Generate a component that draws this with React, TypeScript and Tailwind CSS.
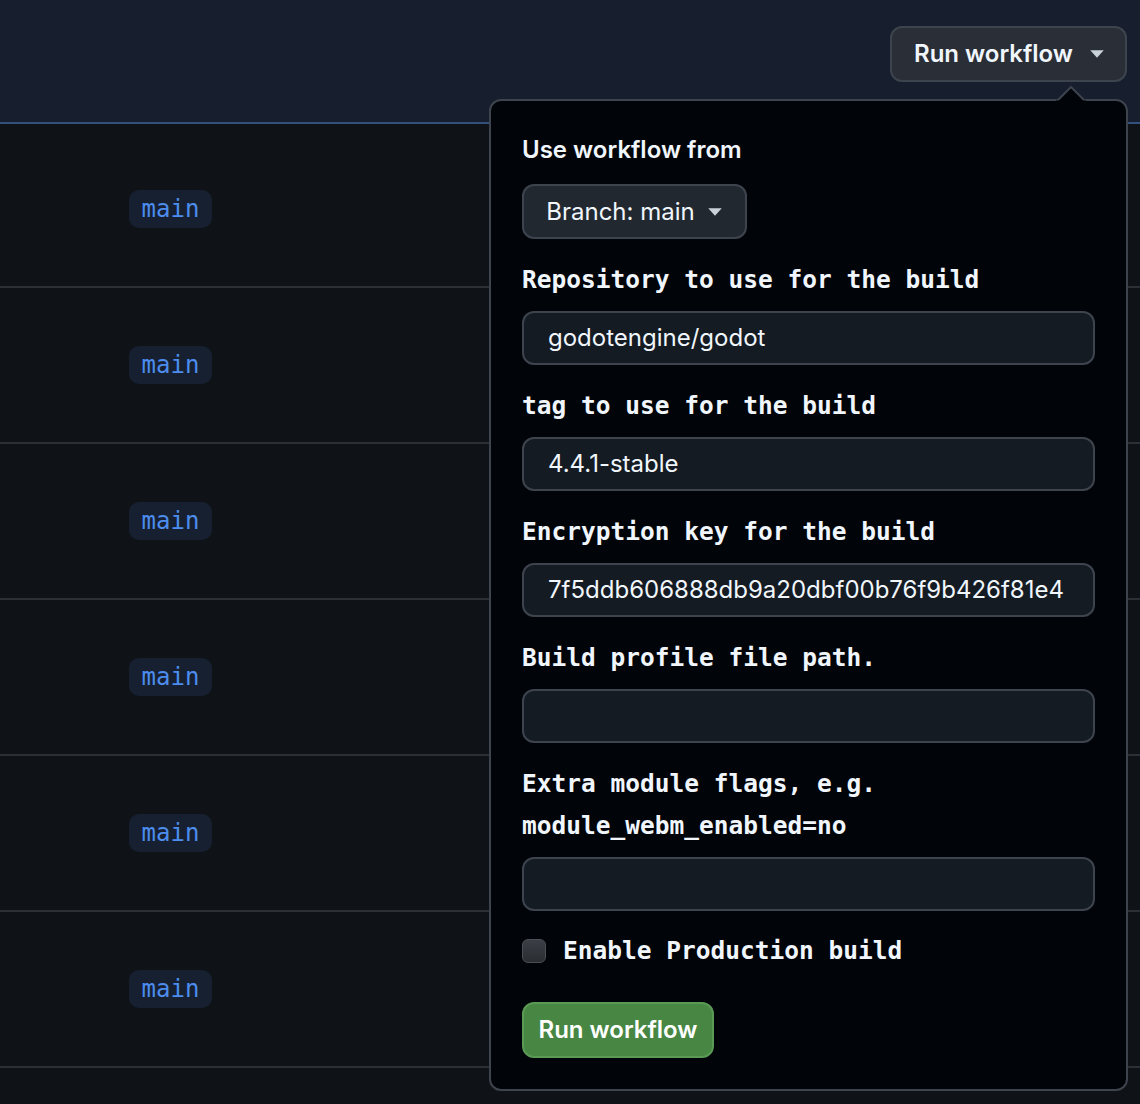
import React from 'react';

const mono = "font-['DejaVu_Sans_Mono','Liberation_Mono',monospace]";
const sans = "font-['Inter','Liberation_Sans',sans-serif]";

function Caret({ className }: { className?: string }) {
  return (
    <svg viewBox="0 0 16 16" className={className} fill="currentColor">
      <path d="M3.5 5.5h9L8 10.5z" />
    </svg>
  );
}

interface FieldProps {
  label: React.ReactNode;
  value?: string;
}

function Field({ label, value }: FieldProps) {
  return (
    <div className="mt-[20px]">
      <div className={`${mono} text-[24.5px] leading-[42px] font-bold text-[#f0f6fc]`}>{label}</div>
      <div className={`mt-[10px] h-[54px] rounded-[12px] border-2 border-[#3d444d] bg-[#151b23] px-[24px] flex items-center ${sans} text-[24px] text-[#f0f6fc]`}>
        {value}
      </div>
    </div>
  );
}

function Row() {
  return (
    <div className="h-[156px] border-b-2 border-[#2b2f36] flex items-center pl-[129px]">
      <span className={`h-[38px] w-[83px] rounded-[10px] bg-[#172031] flex items-center justify-center ${mono} text-[24px] text-[#4c8ded]`}>
        main
      </span>
    </div>
  );
}

export default function App() {
  return (
    <div className={`relative w-[1140px] h-[1104px] overflow-hidden bg-[#0f1217] ${sans}`}>
      <div className="h-[124px] bg-[#171e2d] border-b-2 border-[#33507f] flex justify-end items-start pt-[26px] pr-[13px]">
        <button className="h-[56px] w-[237px] rounded-[12px] border-2 border-[#3d444d] bg-[#2a2e36] flex items-center justify-center gap-[12px] pl-[6px] text-[24px] font-semibold text-[#f0f6fc]">
          Run workflow
          <Caret className="w-[24px] h-[24px] text-[#c9d1d9]" />
        </button>
      </div>

      <div className="pt-[8px]">
        {Array.from({ length: 6 }).map((_, i) => (
          <Row key={i} />
        ))}
      </div>

      <div className="absolute left-[489px] top-[99px] w-[639px] h-[992px] rounded-[12px] border-2 border-[#3d444d] bg-[#010409] px-[31px] pt-[28px]">
        <svg className="absolute left-[565px] top-[-16px]" width="30" height="17" viewBox="0 0 30 17">
          <path d="M1 16 L15 2 L29 16" fill="#010409" stroke="#3d444d" strokeWidth="2" />
          <rect x="0" y="15.5" width="30" height="2" fill="#010409" />
        </svg>

        <div className="text-[24px] leading-[42px] font-semibold text-[#f0f6fc]">Use workflow from</div>
        <button className="mt-[13px] h-[55px] w-[225px] rounded-[12px] border-2 border-[#3d444d] bg-[#212830] flex items-center justify-center gap-[8px] pl-[4px] text-[24px] text-[#f0f6fc]">
          Branch: main
          <Caret className="w-[24px] h-[24px] text-[#c9d1d9]" />
        </button>

        <Field label="Repository to use for the build" value="godotengine/godot" />
        <Field label="tag to use for the build" value="4.4.1-stable" />
        <Field label="Encryption key for the build" value="7f5ddb606888db9a20dbf00b76f9b426f81e4" />
        <Field label="Build profile file path." />
        <Field
          label={
            <>
              Extra module flags, e.g.
              <br />
              module_webm_enabled=no
            </>
          }
        />

        <div className="mt-[19px] h-[42px] flex items-center gap-[17px]">
          <span className="w-[24px] h-[24px] rounded-[6px] border border-[#4a4e55] bg-gradient-to-b from-[#3b3e44] to-[#2a2d32]" />
          <span className={`${mono} text-[24.5px] font-bold text-[#f0f6fc]`}>Enable Production build</span>
        </div>

        <button className="mt-[30px] h-[56px] w-[192px] rounded-[12px] border-2 border-[#5a9a55] bg-[#478743] flex items-center justify-center text-[24px] font-semibold text-white">
          Run workflow
        </button>
      </div>
    </div>
  );
}
